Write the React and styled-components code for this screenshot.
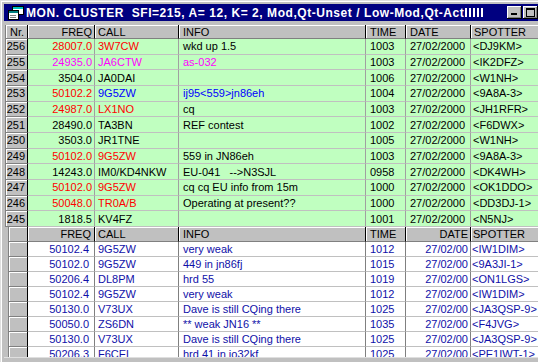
import React from "react"
import styled, { createGlobalStyle } from "styled-components"

const GlobalStyle = createGlobalStyle`
  html, body {
    margin: 0;
    padding: 0;
    background: #c0c0c0;
  }
  body {
    font-family: "Liberation Sans", Arial, sans-serif;
    font-size: 11px;
  }
`

// column widths, first one varies between the two panes
const cols = first => `${first}px 67px 84px 187px 40px 65px 80px`

const topRows = [
  ["256", "28007.0", "3W7CW", "wkd up 1.5", "1003", "<DJ9KM>", "red", "red", "black"],
  ["255", "24935.0", "JA6CTW", "as-032", "1003", "<IK2DFZ>", "magenta", "magenta", "magenta"],
  ["254", "3504.0", "JA0DAI", "", "1006", "<W1NH>", "black", "black", "black"],
  ["253", "50102.2", "9G5ZW", "ij95<559>jn86eh", "1004", "<9A8A-3>", "red", "blue", "blue"],
  ["252", "24987.0", "LX1NO", "cq", "1003", "<JH1RFR>", "red", "red", "black"],
  ["251", "28490.0", "TA3BN", "REF contest", "1002", "<F6DWX>", "black", "black", "black"],
  ["250", "3503.0", "JR1TNE", "", "1005", "<W1NH>", "black", "black", "black"],
  ["249", "50102.0", "9G5ZW", "559 in JN86eh", "1003", "<9A8A-3>", "red", "red", "black"],
  ["248", "14243.0", "IM0/KD4NKW", "EU-041   -->N3SJL", "0958", "<DK4WH>", "black", "black", "black"],
  ["247", "50102.0", "9G5ZW", "cq cq EU info from 15m", "1000", "<OK1DDO>", "red", "red", "black"],
  ["246", "50048.0", "TR0A/B", "Operating at present??", "1000", "<DD3DJ-1>", "red", "red", "black"],
  ["245", "1818.5", "KV4FZ", "", "1001", "<N5NJ>", "black", "black", "black"]
]

const bottomRows = [
  ["50102.4", "9G5ZW", "very weak", "1012", "<IW1DIM>"],
  ["50102.0", "9G5ZW", "449 in jn86fj", "1015", "<9A3JI-1>"],
  ["50206.4", "DL8PM", "hrd 55", "1019", "<ON1LGS>"],
  ["50102.4", "9G5ZW", "very weak", "1012", "<IW1DIM>"],
  ["50130.0", "V73UX", "Dave is still CQing there", "1025", "<JA3QSP-9>"],
  ["50050.0", "ZS6DN", "** weak JN16 **", "1035", "<F4JVG>"],
  ["50130.0", "V73UX", "Dave is still CQing there", "1025", "<JA3QSP-9>"],
  ["50206.3", "F6CEL", "hrd 41 in io32kf", "1025", "<PE1IWT-1>"]
]

const Window = styled.div`
  width: 538px;
  height: 362px;
  overflow: hidden;
  box-sizing: border-box;
  padding: 4px 0 0 4px;
  background: #c0c0c0;
  box-shadow: inset 1px 1px 0 #dfdfdf, inset 2px 2px 0 #fff;
  display: flex;
  flex-direction: column;
`

const TitleBar = styled.div`
  height: 17px;
  flex: none;
  background: #000080;
  color: #fff;
  display: flex;
  align-items: center;
  padding-left: 4px;
  font-weight: bold;
  font-size: 12px;
  white-space: pre;
`

const TitleText = styled.span`
  margin-left: 2px;
  letter-spacing: 0.55px;
`

const Meter = styled.span`
  display: flex;
  gap: 2px;
  margin-left: 1px;
  span {
    width: 2px;
    height: 9px;
    background: #fff;
  }
`

const WinButtons = styled.div`
  margin-left: auto;
  display: flex;
  gap: 1px;
`

const WinButton = styled.div`
  width: 15px;
  height: 13px;
  box-sizing: border-box;
  background: #c0c0c0;
  border-right: 1px solid #000;
  border-bottom: 1px solid #000;
  box-shadow: inset 1px 1px 0 #fff, inset -1px -1px 0 #808080;
  position: relative;
  &::after {
    content: "";
    position: absolute;
    ${p =>
      p.$kind === "min"
        ? `left: 4px; bottom: 3px; width: 6px; height: 2px; background: #000;`
        : `left: 3px; top: 2px; width: 7px; height: 6px; border: 1px solid #000; border-top-width: 2px;`}
  }
`

const TopPane = styled.div`
  margin: 4px 0 0 1px;
  border-left: 1px solid #808080;
  flex: none;
`

const BottomPane = styled.div`
  margin-left: 4px;
  border-left: 1px solid #808080;
  flex: 1;
  min-height: 0;
  overflow: hidden;
  background: #fff;
`

const Footer = styled.div`
  height: 4px;
  flex: none;
  background: #c0c0c0;
  border-top: 1px solid #dfdfdf;
`

const Row = styled.div`
  display: grid;
  grid-template-columns: ${p => cols(p.$first)};
  height: ${p => p.$h}px;
  background: ${p => p.$bg || "transparent"};
`

const HeadCell = styled.div`
  box-sizing: border-box;
  background: #c0c0c0;
  border-right: 1px solid #000;
  border-bottom: 1px solid #808080;
  box-shadow: inset 1px 1px 0 #fff;
  color: #000;
  display: flex;
  align-items: center;
  justify-content: ${p => (p.$right ? "flex-end" : "flex-start")};
  padding: 0 ${p => (p.$right ? p.$pr || 2 : 0)}px 0 ${p => (p.$right ? 0 : p.$pl || 4)}px;
  overflow: hidden;
  white-space: pre;
`

const NrCell = styled.div`
  box-sizing: border-box;
  background: #c0c0c0;
  border-right: 1px solid #000;
  border-bottom: 1px solid #808080;
  box-shadow: inset 1px 1px 0 #fff;
  color: #000;
  display: flex;
  align-items: center;
  justify-content: flex-end;
  padding-right: 2px;
`

const Cell = styled.div`
  box-sizing: border-box;
  border-right: 1px solid ${p => p.$vline};
  border-bottom: 1px solid ${p => p.$hline};
  color: ${p => p.$color};
  display: flex;
  align-items: center;
  justify-content: ${p => (p.$right ? "flex-end" : "flex-start")};
  padding: 0 ${p => (p.$right ? p.$pr || 2 : 0)}px 0 ${p => (p.$right ? 0 : p.$pl || 4)}px;
  overflow: hidden;
  white-space: pre;
`

const TitleIcon = () => (
  <svg width="16" height="14" viewBox="0 0 16 14">
    <rect x="4.5" y="0.5" width="11" height="8" fill="#fff" stroke="#000" />
    <rect x="5" y="1" width="10" height="2" fill="#00c0c0" />
    <rect x="0.5" y="4.5" width="10" height="9" fill="#fff" stroke="#000" />
    <rect x="1" y="5" width="9" height="2" fill="#008080" />
    <rect x="2" y="9" width="6" height="1" fill="#808080" />
    <rect x="2" y="11" width="6" height="1" fill="#808080" />
  </svg>
)

const TopLine = ({ r }) => {
  const [nr, freq, call, info, time, spotter, fc, cc, ic] = r
  const line = { $vline: "#a0a0a0", $hline: "#c0c0c0" }
  return (
    <Row $first={22} $h={15.67} $bg="#c0ffc0">
      <NrCell>{nr}</NrCell>
      <Cell {...line} $right $color={fc}>{freq}</Cell>
      <Cell {...line} $pl={3} $color={cc}>{call}</Cell>
      <Cell {...line} $color={ic}>{info}</Cell>
      <Cell {...line} $color="#000">{time}</Cell>
      <Cell {...line} $color="#000">27/02/2000</Cell>
      <Cell {...line} $pl={2} $color="#000">{spotter}</Cell>
    </Row>
  )
}

const BottomLine = ({ r }) => {
  const [freq, call, info, time, spotter] = r
  const line = { $vline: "#808080", $hline: "#c0c0c0", $color: "#1010a8" }
  return (
    <Row $first={19} $h={15} $bg="#fff">
      <NrCell />
      <Cell {...line} $right $pr={5}>{freq}</Cell>
      <Cell {...line} $pl={3}>{call}</Cell>
      <Cell {...line}>{info}</Cell>
      <Cell {...line}>{time}</Cell>
      <Cell {...line} $right $pr={2}>27/02/00</Cell>
      <Cell {...line} $pl={1}>{spotter}</Cell>
    </Row>
  )
}

export default function App() {
  return (
    <Window>
      <GlobalStyle />
      <TitleBar>
        <TitleIcon />
        <TitleText>MON. CLUSTER  SFI=215, A= 12, K= 2, Mod,Qt-Unset / Low-Mod,Qt-Act</TitleText>
        <Meter>
          <span />
          <span />
          <span />
          <span />
          <span />
        </Meter>
        <WinButtons>
          <WinButton $kind="min" />
          <WinButton $kind="max" />
        </WinButtons>
      </TitleBar>

      <TopPane>
        <Row $first={22} $h={14}>
          <HeadCell>Nr.</HeadCell>
          <HeadCell $right>FREQ</HeadCell>
          <HeadCell $pl={3}>CALL</HeadCell>
          <HeadCell>INFO</HeadCell>
          <HeadCell>TIME</HeadCell>
          <HeadCell>DATE</HeadCell>
          <HeadCell $pl={3}>SPOTTER</HeadCell>
        </Row>
        {topRows.map((r, i) => (
          <TopLine key={i} r={r} />
        ))}
      </TopPane>

      <BottomPane>
        <Row $first={19} $h={15}>
          <HeadCell />
          <HeadCell $right $pr={3}>FREQ</HeadCell>
          <HeadCell $pl={3}>CALL</HeadCell>
          <HeadCell>INFO</HeadCell>
          <HeadCell>TIME</HeadCell>
          <HeadCell $right $pr={2}>DATE</HeadCell>
          <HeadCell $pl={2}>SPOTTER</HeadCell>
        </Row>
        {bottomRows.map((r, i) => (
          <BottomLine key={i} r={r} />
        ))}
      </BottomPane>
      <Footer />
    </Window>
  )
}
